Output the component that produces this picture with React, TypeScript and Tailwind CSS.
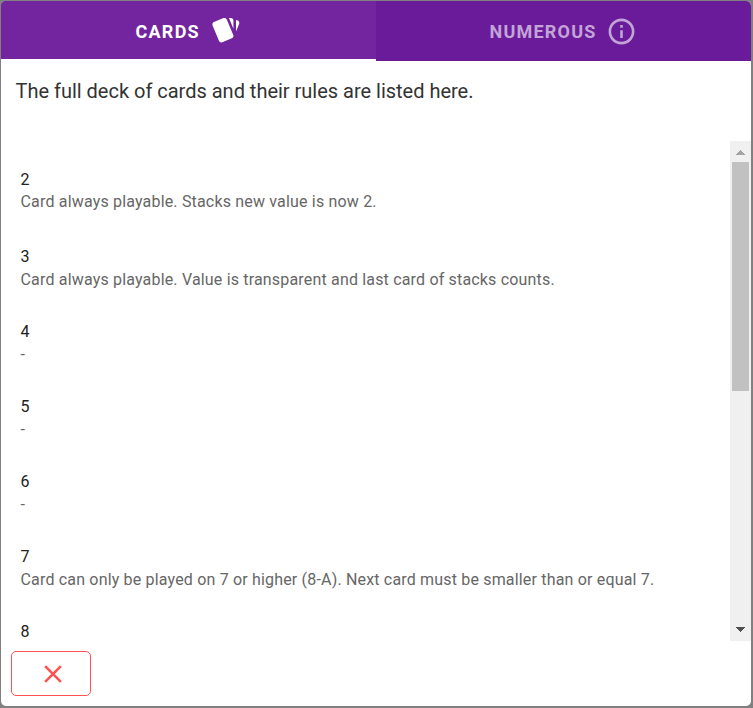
const rules = [
  { name: '2', text: 'Card always playable. Stacks new value is now 2.', row: 'h-[77px]', title: 'h-[22px]' },
  { name: '3', text: 'Card always playable. Value is transparent and last card of stacks counts.', row: 'h-[75px]', title: 'h-[23px]' },
  { name: '4', text: '-', row: 'h-[75px]', title: 'h-[23px]' },
  { name: '5', text: '-', row: 'h-[75px]', title: 'h-[23px]' },
  { name: '6', text: '-', row: 'h-[75px]', title: 'h-[23px]' },
  { name: '7', text: 'Card can only be played on 7 or higher (8-A). Next card must be smaller than or equal 7.', row: 'h-[75px]', title: 'h-[23px]' },
  { name: '8', text: '', row: 'h-[20px]', title: 'h-[20px]' },
];

function CardsIcon() {
  return (
    <svg viewBox="0 0 24 24" className="size-[31px]" fill="currentColor">
      <path d="M21.47,4.35L20.13,3.79V12.82L22.56,6.96C22.97,5.94 22.5,4.77 21.47,4.35M1.97,8.05L6.93,20C7.24,20.77 7.97,21.24 8.74,21.26C9,21.26 9.27,21.21 9.53,21.1L16.9,18.05C17.65,17.74 18.11,17 18.13,16.26C18.14,16 18.09,15.71 18,15.45L13,3.5C12.71,2.73 11.97,2.26 11.19,2.25C10.93,2.25 10.67,2.31 10.42,2.4L3.06,5.45C2.04,5.87 1.55,7.04 1.97,8.05M18.12,4.25A2,2 0 0,0 16.12,2.25H14.67L18.12,10.59" />
    </svg>
  );
}

function InfoIcon() {
  return (
    <svg viewBox="0 0 24 24" className="size-[31px]" fill="currentColor">
      <path d="M11,9H13V7H11M12,20C7.59,20 4,16.41 4,12C4,7.59 7.59,4 12,4C16.41,4 20,7.59 20,12C20,16.41 16.41,20 12,20M12,2A10,10 0 0,0 2,12A10,10 0 0,0 12,22A10,10 0 0,0 22,12A10,10 0 0,0 12,2M11,17H13V11H11V17Z" />
    </svg>
  );
}

function Scrollbar() {
  return (
    <div className="flex w-[21px] shrink-0 flex-col items-center bg-[#f0f0f0]">
      <svg className="h-[21px] w-[21px]" viewBox="0 0 21 21" fill="#a3a3a3" shapeRendering="crispEdges">
        <path d="M6 14L10.5 9L15 14Z" />
      </svg>
      <div className="h-[229px] w-[17px] bg-[#c1c1c1]" />
      <svg className="mt-auto h-[21px] w-[21px]" viewBox="0 0 21 21" fill="#505050" shapeRendering="crispEdges">
        <path d="M6 7L10.5 12L15 7Z" />
      </svg>
    </div>
  );
}

export default function App() {
  return (
    <div className="h-[708px] w-[753px] bg-[#808080] pt-px pl-px font-['Roboto',sans-serif]">
      <div className="flex h-[705px] w-[750px] flex-col overflow-hidden rounded-[5px] bg-white">
        <div className="flex h-[60px] shrink-0 bg-[#6a1b9a] text-[18px] font-bold">
          <div className="flex w-[375px] items-center border-b-2 border-white bg-[#72259f] pl-[134.5px] text-white">
            <span className="w-[74px] pt-[2px] tracking-[1.25px]">CARDS</span>
            <CardsIcon />
          </div>
          <div className="flex w-[375px] items-center pl-[113.5px] text-[#c3a4d7]">
            <span className="w-[116px] pt-px tracking-[1.22px]">NUMEROUS</span>
            <InfoIcon />
          </div>
        </div>
        <p className="h-[80px] shrink-0 pt-[14px] pl-[14.5px] text-[20px] leading-8 tracking-[-0.01px] text-[#333333]">
          The full deck of cards and their rules are listed here.
        </p>
        <div className="flex h-[500px] shrink-0">
          <div className="flex-1 overflow-hidden pt-[29px] pl-[19.5px]">
            {rules.map((rule) => (
              <div key={rule.name} className={rule.row}>
                <div className={`${rule.title} text-[16px] leading-5 text-[#212121]`}>{rule.name}</div>
                {rule.text && (
                  <div className="text-[16px] leading-5 tracking-[0.175px] text-[#666666]">{rule.text}</div>
                )}
              </div>
            ))}
          </div>
          <Scrollbar />
        </div>
        <div className="pt-[10px] pl-[10px]">
          <button className="flex h-[45px] w-[80px] items-center justify-center rounded-[5px] border border-[#ff5252] pl-[4px]">
            <svg viewBox="0 0 24 24" className="size-[30px]" fill="#ff5252">
              <path d="M19,6.41L17.59,5L12,10.59L6.41,5L5,6.41L10.59,12L5,17.59L6.41,19L12,13.41L17.59,19L19,17.59L13.41,12L19,6.41Z" />
            </svg>
          </button>
        </div>
      </div>
    </div>
  );
}
